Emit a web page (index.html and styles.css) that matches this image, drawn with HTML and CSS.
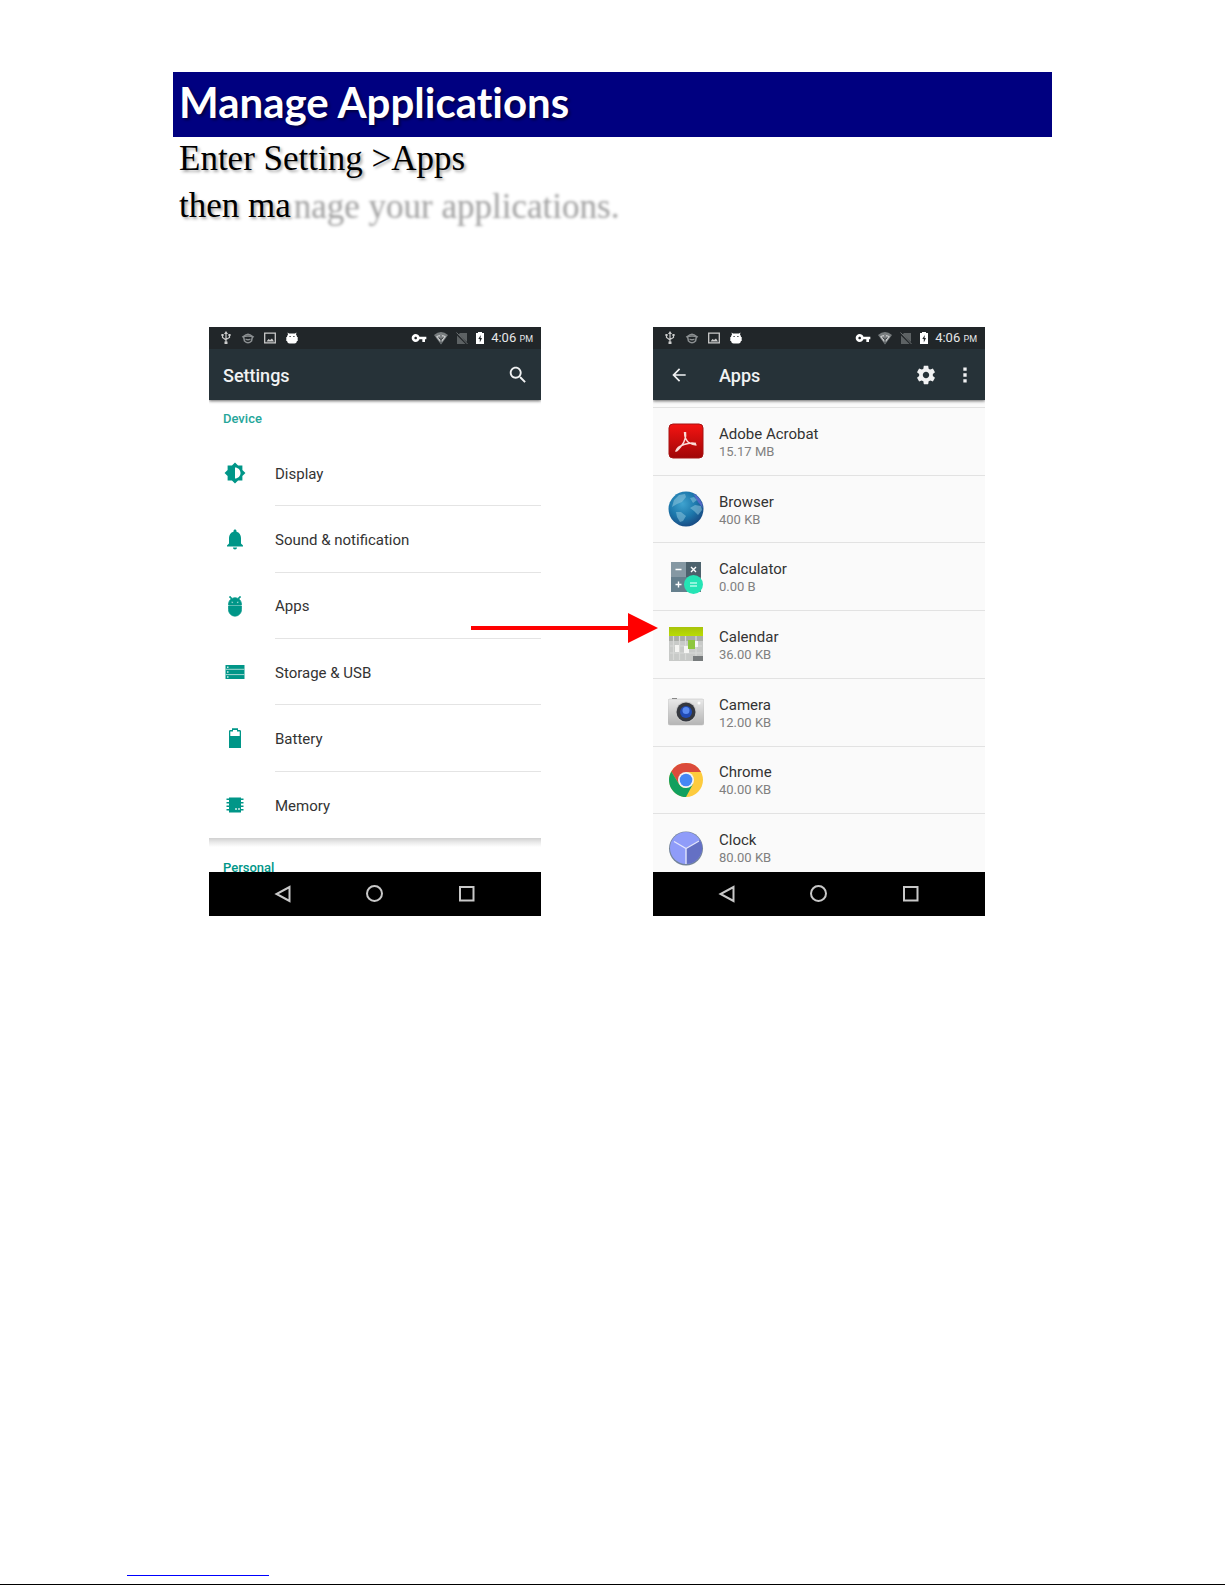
FILE: index.html
```html
<!DOCTYPE html>
<html lang="en">
<head>
<meta charset="utf-8">
<title>Manage Applications</title>
<meta name="viewport" content="width=device-width, initial-scale=1">
<link rel="stylesheet" href="styles.css">
</head>
<body>
<svg class="sprite" aria-hidden="true">
  <symbol id="usb" viewBox="0 0 14 14"><path d="M7 2v9M3.500 4.500v2L7 9M10.500 4.500v2L7 8.500" fill="none" stroke="#ccc" stroke-width="1.200"/><path d="M7 0l2 3H5zM2.400 3h2.200v2H2.400zM9.400 3h2.200v2H9.400zM5.500 10.500h3V13h-3z" fill="#ccc"/></symbol>
  <symbol id="face" viewBox="0 0 14 14"><path d="M2.500 5.500Q7 1 11.500 5.500L10.500 10Q7 13.500 3.500 10z" fill="none" stroke="#8b8f91" stroke-width="1.500"/><path d="M1 6Q7 4 13 6M4.500 8q2.500 1.500 5 0" fill="none" stroke="#8b8f91" stroke-width="1.300"/></symbol>
  <symbol id="picture" viewBox="0 0 14 14"><path d="M1.700 2.200h10.600v9.600H1.700z" fill="none" stroke="#ccc" stroke-width="1.300"/><path d="M3.500 10.500l2-2.500 1.500 1 2-1.500 2 3z" fill="#ccc"/></symbol>
  <symbol id="robot" viewBox="0 0 14 14"><path d="M2.500 1.500l1.500 1h6l1.500-1-.5 2Q12 4.500 12 6h.7v4H12q-.5 2.500-2.500 2.500h-5Q2.500 12.500 2 10h-.7V6H2q0-1.500 1-2.500z" fill="#fff"/><path d="M4.500 5.500h1.200M8.300 5.500h1.200" stroke="#212629" stroke-width="1.200"/></symbol>
  <symbol id="key" viewBox="0 0 24 24"><path fill="#fff" d="M12.650 10C11.830 7.670 9.610 6 7 6c-3.310 0-6 2.690-6 6s2.690 6 6 6c2.610 0 4.830-1.670 5.650-4H17v4h4v-4h2v-4H12.650zM7 14c-1.100 0-2-.9-2-2s.9-2 2-2 2 .9 2 2-.9 2-2 2z"/></symbol>
  <symbol id="wifi" viewBox="0 0 16 16"><path d="M1 5q7-6 14 0L8 14.500z" fill="#777c7e"/><path d="M3 6.500Q8 3 13 6.500L8 13z" fill="#c4c6c7"/><path d="M8 5v8M6 6.500V8l2 1.500L10 8V6.500" fill="none" stroke="#33393c" stroke-width="1"/></symbol>
  <symbol id="nosim" viewBox="0 0 14 14"><path d="M5 2h7v9L3.500 3.500zM2 4.500L10.500 13H2z" fill="#5d6264"/><path d="M1.500 1.500l11 11.500" stroke="#6d7173" stroke-width="1"/></symbol>
  <symbol id="charge" viewBox="0 0 10 14"><path d="M1 2h2V1h4v1h2v11H1z" fill="#fff"/><path d="M5.800 4L3.300 8h1.500v3.500L7 7H5.500z" fill="#212629"/></symbol>
</svg>

<main class="page">
  <h1 class="banner">Manage Applications</h1>
  <p class="intro">Enter Setting &gt;Apps<br>then ma<span class="faded">nage your applications.</span></p>

  <div class="screens">
    <div class="slot">
      <section class="phone" aria-label="Settings screen">
        <div class="status">
          <svg class="ic14"><use href="#usb"/></svg><svg class="ic14"><use href="#face"/></svg><svg class="ic14"><use href="#picture"/></svg><svg class="ic14"><use href="#robot"/></svg>
          <div class="status-right">
            <svg class="ic16"><use href="#key"/></svg><svg class="ic16"><use href="#wifi"/></svg><svg class="ic14"><use href="#nosim"/></svg><svg class="ic10"><use href="#charge"/></svg>
            <span class="time">4:06 <small>PM</small></span>
          </div>
        </div>
        <header class="bar">
          <h2>Settings</h2>
          <button class="tool search" aria-label="Search"><svg viewBox="0 0 24 24"><path d="M15.500 14h-.79l-.28-.27C15.410 12.590 16 11.110 16 9.500 16 5.910 13.090 3 9.500 3S3 5.910 3 9.500 5.910 16 9.500 16c1.610 0 3.090-.59 4.230-1.570l.27.28v.79l5 4.990L20.490 19l-4.990-5zm-6 0C7.010 14 5 11.990 5 9.500S7.010 5 9.500 5 14 7.010 14 9.500 11.990 14 9.500 14z"/></svg></button>
        </header>
        <div class="content">
          <h3 class="group">Device</h3>
          <ul class="settings">
            <li><svg viewBox="-1 -1 26 26"><path d="M20 15.310L23.310 12 20 8.690V4h-4.690L12 .69 8.690 4H4v4.690L.69 12 4 15.310V20h4.690L12 23.310 15.310 20H20v-4.690zM12 18V6c3.310 0 6 2.690 6 6s-2.690 6-6 6z"/></svg><a href="#display">Display</a></li>
            <li><svg viewBox="0 0 24 24"><path d="M12 22.500c1.100 0 2-.9 2-2h-4c0 1.100.89 2 2 2zm6-6v-5.500c0-3.070-1.640-5.640-4.500-6.320V4c0-.83-.67-1.500-1.500-1.500s-1.500.67-1.500 1.500v.68C7.630 5.360 6 7.920 6 11v5.500l-2 2v1h16v-1l-2-2z"/></svg><a href="#sound">Sound &amp; notification</a></li>
            <li><svg viewBox="-1 -1 26 26"><path d="M5 16c0 3.870 3.130 7 7 7s7-3.130 7-7v-4H5v4zM16.120 4.370l2.100-2.100-.82-.83-2.300 2.310C14.160 3.280 13.120 3 12 3s-2.160.28-3.090.75L6.600 1.440l-.82.83 2.100 2.100C6.140 5.640 5 7.680 5 10v1h14v-1c0-2.320-1.140-4.360-2.880-5.630zM9 9c-.55 0-1-.45-1-1s.45-1 1-1 1 .45 1 1-.45 1-1 1zm6 0c-.55 0-1-.45-1-1s.45-1 1-1 1 .45 1 1-.45 1-1 1z" stroke="#009688" stroke-width=".8"/></svg><a href="#apps">Apps</a></li>
            <li><svg viewBox="0 0 24 24"><path d="M2.500 5h19v14h-19z"/><path d="M2.500 9.300h19M2.500 14.600h19" stroke="#a5d8d2"/><path d="M4 6.500h1.500v1.500H4zM4 11.200h1.500v1.500H4zM4 16.200h1.500v1.500H4z" fill="#cfeae7"/></svg><a href="#storage">Storage &amp; USB</a></li>
            <li><svg viewBox="0 0 24 24"><path d="M16.700 4H15V2.300H9V4H7.300C6.600 4 6 4.600 6 5.300V22h12V5.300C18 4.600 17.400 4 16.700 4z"/><path d="M7.300 10V5.500H10V4h4v1.500h2.700V10z" fill="#fff"/></svg><a href="#battery">Battery</a></li>
            <li><svg viewBox="0 0 24 24"><path d="M6 4.500h12v15H6zM3.500 5.500h17v1.500h-17zM3.500 9h17v1.500h-17zM3.500 12.500h17V14h-17zM3.500 16h17v1.500h-17z"/><path d="M12 15h2v2h-2zM15 15h2v2h-2z" fill="#9ed5cf"/></svg><a href="#memory">Memory</a></li>
          </ul>
          <h3 class="group next">Personal</h3>
        </div>
        <nav class="keys">
          <button aria-label="Back"><svg viewBox="0 0 18 18"><path d="M15.500 2v14L2.500 9z"/></svg></button>
          <button aria-label="Home"><svg viewBox="0 0 18 18"><circle cx="8.500" cy="8.500" r="7.500"/></svg></button>
          <button aria-label="Recent"><svg viewBox="0 0 18 18"><path d="M2 2h13.500v13.500H2z"/></svg></button>
        </nav>
      </section>
      <svg class="arrow" viewBox="0 0 187 30"><path d="M0 13h157V0l30 15-30 15V17H0z" fill="#f00"/></svg>
    </div>

    <div class="slot">
      <section class="phone" aria-label="Apps screen">
        <div class="status">
          <svg class="ic14"><use href="#usb"/></svg><svg class="ic14"><use href="#face"/></svg><svg class="ic14"><use href="#picture"/></svg><svg class="ic14"><use href="#robot"/></svg>
          <div class="status-right">
            <svg class="ic16"><use href="#key"/></svg><svg class="ic16"><use href="#wifi"/></svg><svg class="ic14"><use href="#nosim"/></svg><svg class="ic10"><use href="#charge"/></svg>
            <span class="time">4:06 <small>PM</small></span>
          </div>
        </div>
        <header class="bar apps-bar">
          <button class="tool" aria-label="Back"><svg viewBox="0 0 24 24"><path d="M20 11H7.800l5.600-5.600L12 4l-8 8 8 8 1.400-1.400L7.800 13H20z"/></svg></button>
          <h2>Apps</h2>
          <button class="tool gear" aria-label="Manage"><svg viewBox="0 0 24 24"><path d="M19.430 12.980c.04-.32.07-.64.07-.98s-.03-.66-.07-.98l2.110-1.650c.19-.15.24-.42.12-.64l-2-3.460c-.12-.22-.39-.3-.61-.22l-2.490 1c-.52-.4-1.080-.73-1.690-.98l-.38-2.650C14.460 2.180 14.250 2 14 2h-4c-.25 0-.46.18-.49.42l-.38 2.650c-.61.25-1.170.59-1.690.98l-2.490-1c-.23-.09-.49 0-.61.22l-2 3.460c-.13.22-.07.49.12.64l2.110 1.650c-.04.32-.07.65-.07.98s.03.66.07.98l-2.110 1.650c-.19.15-.24.42-.12.64l2 3.460c.12.22.39.3.61.22l2.490-1c.52.4 1.080.73 1.690.98l.38 2.650c.03.24.24.42.49.42h4c.25 0 .46-.18.49-.42l.38-2.650c.61-.25 1.170-.59 1.690-.98l2.490 1c.23.09.49 0 .61-.22l2-3.460c.12-.22.07-.49-.12-.64l-2.110-1.650zM12 15.500c-1.930 0-3.500-1.570-3.500-3.500s1.570-3.500 3.500-3.500 3.500 1.570 3.500 3.500-1.570 3.500-3.500 3.500z"/></svg></button>
          <button class="tool" aria-label="More"><svg viewBox="0 0 24 24"><path d="M10 3h4v4h-4zM10 10h4v4h-4zM10 17h4v4h-4z"/></svg></button>
        </header>
        <div class="content grey">
          <ul class="apps">
            <li><svg viewBox="0 0 36 36"><defs><linearGradient id="gr" x1="0" y1="0" x2="0" y2="1"><stop offset="0" stop-color="#f51412"/><stop offset="1" stop-color="#a00607"/></linearGradient></defs><rect x="1" y="1" width="34" height="34" rx="4" fill="url(#gr)" stroke="#a61212" stroke-width="1"/><path d="M16.500 9q0 8 5 11 3 2 7 2M17.500 9q1 7-3.500 13t-6 6q1-4 8-6.500t12-1" fill="none" stroke="#fbdcd8" stroke-width="1.400"/></svg><div><h4>Adobe Acrobat</h4><p>15.17 MB</p></div></li>
            <li><svg viewBox="0 0 36 36"><defs><radialGradient id="gl" cx=".4" cy=".35" r=".65"><stop offset="0" stop-color="#3fa3cf"/><stop offset=".6" stop-color="#1c77ab"/><stop offset="1" stop-color="#194f87"/></radialGradient></defs><circle cx="18" cy="18" r="17.500" fill="url(#gl)"/><path d="M25 2.500Q34 7 35 17l-5-6z" fill="#6c68d8" opacity=".7"/><path d="M6 9l5-5 6-1 1 3-4 5-5 2-5 3zM22 17l5-3 6 1 1 4-4 5-4-4zM8 21l5 0 5 4-3 5-3 1-3-5zM22 7l4-1 3 3-4 3z" fill="#8cc4dc" opacity=".55"/></svg><div><h4>Browser</h4><p>400 KB</p></div></li>
            <li><svg viewBox="0 0 36 36"><path d="M3 3h15v15H3z" fill="#8598a3"/><path d="M18 3h15v15H18z" fill="#4d626d"/><path d="M3 18h15v15H3z" fill="#657f8d"/><path d="M18 18h15v15H18z" fill="#607681"/><path d="M7.500 10.500h6M23 8l5 5M28 8l-5 5M7.500 25.500h6M10.500 22.500v6" stroke="#fff" stroke-width="1.400"/><circle cx="25.500" cy="25.500" r="9.500" fill="#25e4b5"/><path d="M22 24h7M22 27h7" stroke="#b2fae9" stroke-width="1.500"/></svg><div><h4>Calculator</h4><p>0.00 B</p></div></li>
            <li><svg viewBox="0 0 36 36"><defs><linearGradient id="gc" x1="0" y1="0" x2="0" y2="1"><stop offset="0" stop-color="#a8c30b"/><stop offset="1" stop-color="#b9dc03"/></linearGradient></defs><path d="M1 9h34v26H1z" fill="#c8cac8"/><path d="M1 9h34v6H1z" fill="#a9aca7"/><path d="M5.500 10v24M11.500 10v24M17.500 10v24M28 10v20M2 20h32M2 27h32" stroke="#d8d9d7" stroke-width="1.200"/><path d="M7 19h4v7H7zM16 20h5v7h-5z" fill="#f5f5f3"/><path d="M20 14h7v9h-7z" fill="#8ec63f"/><path d="M27 15h3v6h-3z" fill="#f7f7f7"/><path d="M25 30h10v5H25z" fill="#777b7c"/><path d="M1 1h34v9H1z" fill="url(#gc)"/></svg><div><h4>Calendar</h4><p>36.00 KB</p></div></li>
            <li><svg viewBox="0 0 36 36"><defs><linearGradient id="gm" x1="0" y1="0" x2="0" y2="1"><stop offset="0" stop-color="#e9e9e9"/><stop offset="1" stop-color="#b5b5b5"/></linearGradient></defs><rect x="0" y="5" width="36" height="26" rx="2" fill="url(#gm)" stroke="#bbb" stroke-width=".5"/><path d="M4 4.500h5" stroke="#888"/><circle cx="31" cy="9" r="1.500" fill="#fff"/><circle cx="18" cy="18" r="10.500" fill="#c9c9c9"/><circle cx="18" cy="18" r="9.500" fill="#35383f"/><circle cx="18" cy="18" r="6" fill="#214bb5"/><circle cx="18" cy="16.500" r="3.500" fill="#5a8bf0"/></svg><div><h4>Camera</h4><p>12.00 KB</p></div></li>
            <li><svg viewBox="0 0 36 36"><circle cx="18" cy="18" r="17" fill="#fdcb3e"/><path d="M18 10H33A17 17 0 0 0 3.300 9.500L11 22z" fill="#db4a3b"/><path d="M3.300 9.500A17 17 0 0 0 18 35l7-13-7 4a8 8 0 0 1-7-4z" fill="#11a05e"/><circle cx="18" cy="18" r="8" fill="#f4f4f4"/><circle cx="18" cy="18" r="6.300" fill="#4687f4"/></svg><div><h4>Chrome</h4><p>40.00 KB</p></div></li>
            <li><svg viewBox="0 0 36 36"><circle cx="18" cy="18.500" r="17" fill="#73849a"/><circle cx="18" cy="18" r="16" fill="#8f9cf9"/><path d="M18 18l14-8a16 16 0 0 1-14 24z" fill="#6470c4"/><path d="M6 11.500L18 18.500l13-7.500M18 18.500V34" fill="none" stroke="#e2e5fc" stroke-width="1.400"/></svg><div><h4>Clock</h4><p>80.00 KB</p></div></li>
          </ul>
        </div>
        <nav class="keys">
          <button aria-label="Back"><svg viewBox="0 0 18 18"><path d="M15.500 2v14L2.500 9z"/></svg></button>
          <button aria-label="Home"><svg viewBox="0 0 18 18"><circle cx="8.500" cy="8.500" r="7.500"/></svg></button>
          <button aria-label="Recent"><svg viewBox="0 0 18 18"><path d="M2 2h13.500v13.500H2z"/></svg></button>
        </nav>
      </section>
    </div>
  </div>
</main>
<footer class="footer"><div class="rule"></div></footer>
</body>
</html>
```
FILE: styles.css
```css
* { box-sizing: border-box; }
body {
  margin: 0;
  min-height: 100vh;
  display: flex;
  flex-direction: column;
  background: #fff;
  font-family: Roboto, sans-serif;
}
h1, h2, h3, h4, p, ul { margin: 0; padding: 0; }
ul { list-style: none; }
button { padding: 0; border: 0; background: none; }
svg { display: block; flex: none; }
.sprite { position: absolute; width: 0; height: 0; }

.page { padding: 72px 173px 0; }
.banner {
  padding: 0 6px 5px;
  background: #000080;
  color: #fff;
  font: bold 42px/60px Lato, sans-serif;
  font-variant-ligatures: none;
  text-shadow: 2px 2px 3px rgba(0, 0, 0, .5);
}
.intro {
  margin-top: -2px;
  padding: 0 6px;
  color: #000;
  font: 35px/47px "Liberation Serif", serif;
  text-shadow: 2px 2px 3px rgba(0, 0, 0, .35);
}
.faded {
  color: transparent;
  text-shadow: 3px 1px 3px rgba(0, 0, 0, .38);
}

.screens {
  display: grid;
  grid-template-columns: 1fr 1fr;
  gap: 112px;
  padding: 98px 67px 0 36px;
}
.slot { position: relative; min-width: 0; }
.arrow {
  position: absolute;
  z-index: 1;
  top: 286px;
  right: -117px;
  width: 187px;
  height: 30px;
}

.phone { background: #fff; }
.status {
  display: flex;
  align-items: center;
  gap: 8px;
  height: 22px;
  padding: 0 8px 0 10px;
  background: #212629;
}
.status-right {
  display: flex;
  align-items: center;
  gap: 6px;
  margin-left: auto;
}
.ic10 { width: 10px; height: 14px; }
.ic14 { width: 14px; height: 14px; }
.ic16 { width: 16px; height: 16px; }
.time { color: #e6e7e8; font-size: 13px; line-height: 22px; white-space: nowrap; }
.time small { font-size: 9px; }

.bar {
  position: relative;
  display: flex;
  align-items: center;
  height: 51px;
  padding: 0 12px 0 14px;
  background: #263238;
  box-shadow: 0 1px 3px rgba(0, 0, 0, .6);
  clip-path: inset(0 0 -8px 0);
}
.bar h2 {
  flex: 1;
  padding-top: 2px;
  color: #f1f2f3;
  font-size: 18px;
  font-weight: 500;
  line-height: 24px;
}
.tool svg { width: 20px; height: 20px; fill: #f1f2f3; }
.search svg, .gear svg { width: 22px; height: 22px; }
.apps-bar { gap: 18px; padding: 0 10px 0 16px; }
.apps-bar h2 { padding-left: 12px; }

.content { height: 472px; overflow: hidden; }
.group {
  height: 40px;
  padding: 7px 14px 0;
  color: #26a69a;
  font-size: 13px;
  font-weight: 500;
  line-height: 24px;
}
.next {
  padding-top: 18px;
  color: #009688;
  background: linear-gradient(#d0d0d0, #e8e8e8 4px, #fff 9px);
}
.settings {
  display: grid;
  grid-auto-rows: 1fr;
  height: 398px;
}
.settings li {
  display: flex;
  align-items: center;
  gap: 28px;
  padding-left: 14px;
}
.settings svg { width: 24px; height: 24px; fill: #009688; }
.settings a {
  display: flex;
  align-items: center;
  flex: 1;
  height: 100%;
  padding-top: 2px;
  border-bottom: 1px solid #e4e4e4;
  color: #333;
  font-size: 15px;
  text-decoration: none;
}
.settings li:last-child a { border-bottom: 0; }

.grey { padding-top: 7px; background: #fafafa; }
.apps {
  display: grid;
  grid-auto-rows: 1fr;
  height: 474px;
}
.apps li {
  display: flex;
  align-items: center;
  gap: 15px;
  padding-left: 15px;
  border-top: 1px solid #e2e2e2;
}
.apps svg { width: 36px; height: 36px; }
.apps div { padding-top: 3px; }
.apps h4 { color: #333; font-size: 15px; font-weight: 400; line-height: 18px; }
.apps p { color: #808080; font-size: 13px; line-height: 18px; }

.keys {
  display: flex;
  align-items: center;
  justify-content: center;
  gap: 74px;
  height: 44px;
  background: #000;
}
.keys svg {
  width: 18px;
  height: 18px;
  fill: none;
  stroke: #c8c8c8;
  stroke-width: 2;
}

.footer {
  display: flex;
  align-items: flex-start;
  height: 10px;
  margin-top: auto;
  padding-left: 127px;
  border-bottom: 1px solid #000;
}
.rule { width: 142px; border-top: 1px solid #00f; }
```
